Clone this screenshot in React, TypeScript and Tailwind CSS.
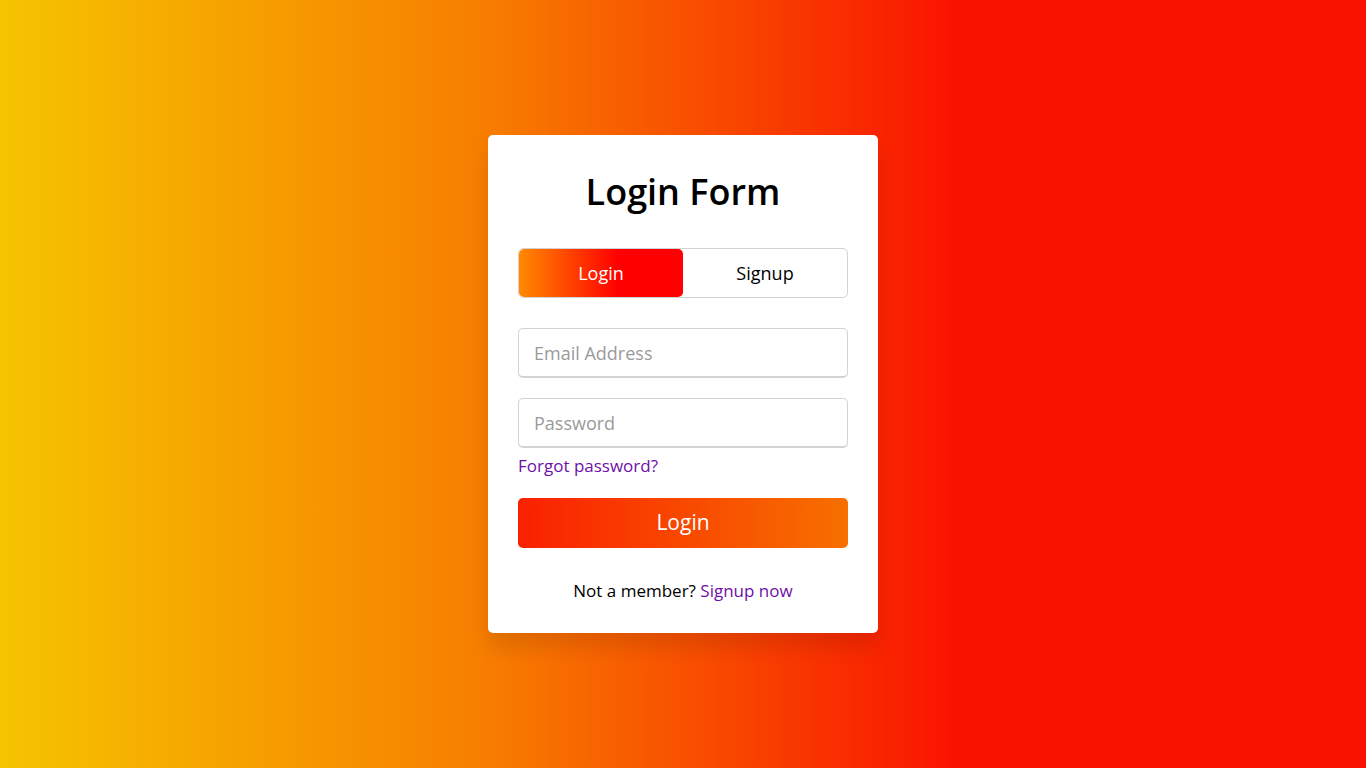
import { useState } from "react";

export default function App() {
  const [tab, setTab] = useState<"login" | "signup">("login");

  return (
    <div
      className="min-h-screen w-full flex items-center justify-center bg-[linear-gradient(to_right,#f6c400_0%,#f77c00_36%,#fa1300_70%,#fa1200_100%)]"
      style={{ fontFamily: '"Open Sans", "Liberation Sans", sans-serif' }}
    >
      <div className="w-[390px] rounded-[5px] bg-white px-[30px] pt-[33px] pb-[30px] shadow-[0_15px_20px_rgba(0,0,0,0.1)]">
        <h1 className="text-center text-[36px] font-semibold leading-[48px] text-black">
          Login Form
        </h1>

        <div className="mt-[32px] flex h-[50px] rounded-[5px] border border-[#d3d3d3] overflow-hidden">
          <button
            onClick={() => setTab("login")}
            className={
              tab === "login"
                ? "w-1/2 rounded-[5px] text-[18px] font-medium text-white bg-[linear-gradient(to_right,#ff8a00_0%,#ff0000_60%)]"
                : "w-1/2 text-[18px] font-medium text-black"
            }
          >
            Login
          </button>
          <button
            onClick={() => setTab("signup")}
            className={
              tab === "signup"
                ? "w-1/2 rounded-[5px] text-[18px] font-medium text-white bg-[linear-gradient(to_right,#ff8a00_0%,#ff0000_60%)]"
                : "w-1/2 text-[18px] font-medium text-black"
            }
          >
            Signup
          </button>
        </div>

        <div className="mt-[30px]">
          <input
            type="text"
            placeholder="Email Address"
            className="h-[50px] w-full rounded-[5px] border border-[#d3d3d3] border-b-2 px-[15px] text-[18px] text-black outline-none placeholder:text-[#9a9a9a]"
          />
        </div>
        <div className="mt-[20px]">
          <input
            type="password"
            placeholder="Password"
            className="h-[50px] w-full rounded-[5px] border border-[#d3d3d3] border-b-2 px-[15px] text-[18px] text-black outline-none placeholder:text-[#9a9a9a]"
          />
        </div>
        <div className="mt-[6px] text-[17px] leading-[24px]">
          <a href="#" className="text-[#6f0fa8]">
            Forgot password?
          </a>
        </div>

        <button className="mt-[20px] h-[50px] w-full rounded-[5px] text-[21px] font-medium text-white bg-[linear-gradient(to_right,#fa2000_0%,#f77000_100%)]">
          Login
        </button>

        <p className="mt-[31px] text-center text-[17px] leading-[24px] text-black">
          Not a member?{" "}
          <a href="#" className="text-[#6f0fa8]">
            Signup now
          </a>
        </p>
      </div>
    </div>
  );
}
